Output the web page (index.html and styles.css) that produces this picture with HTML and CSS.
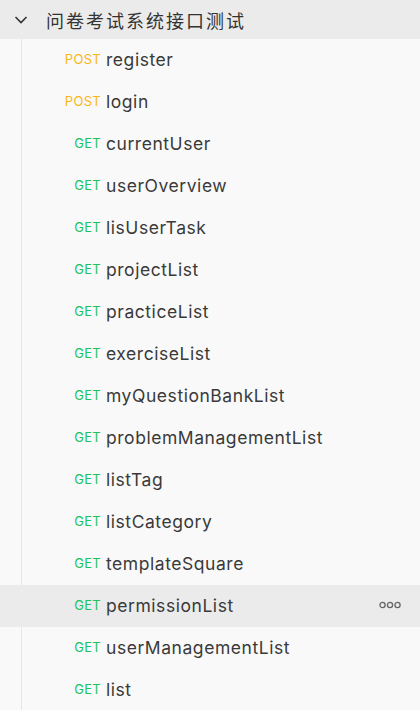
FILE: index.html
```html
<!DOCTYPE html>
<html>
<head>
<meta charset="utf-8">
<link rel="stylesheet" href="styles.css">
</head>
<body>
<div class="tree">
  <div class="folder">
    <svg class="chev" width="14" height="10" viewBox="0 0 14 10"><path d="M1.5 2 L7 7.5 L12.5 2" fill="none" stroke="#333" stroke-width="1.6"/></svg>
    <span class="folder-name">问卷考试系统接口测试</span>
  </div>
  <div class="items">
    <div class="item"><span class="m post">POST</span><span class="n">register</span></div>
    <div class="item"><span class="m post">POST</span><span class="n">login</span></div>
    <div class="item"><span class="m get">GET</span><span class="n">currentUser</span></div>
    <div class="item"><span class="m get">GET</span><span class="n">userOverview</span></div>
    <div class="item"><span class="m get">GET</span><span class="n">lisUserTask</span></div>
    <div class="item"><span class="m get">GET</span><span class="n">projectList</span></div>
    <div class="item"><span class="m get">GET</span><span class="n">practiceList</span></div>
    <div class="item"><span class="m get">GET</span><span class="n">exerciseList</span></div>
    <div class="item"><span class="m get">GET</span><span class="n">myQuestionBankList</span></div>
    <div class="item"><span class="m get">GET</span><span class="n">problemManagementList</span></div>
    <div class="item"><span class="m get">GET</span><span class="n">listTag</span></div>
    <div class="item"><span class="m get">GET</span><span class="n">listCategory</span></div>
    <div class="item"><span class="m get">GET</span><span class="n">templateSquare</span></div>
    <div class="item active"><span class="m get">GET</span><span class="n">permissionList</span>
      <svg class="more" width="22" height="8" viewBox="0 0 22 8"><circle cx="3.5" cy="4" r="2.6" fill="none" stroke="#666" stroke-width="1.3"/><circle cx="11" cy="4" r="2.6" fill="none" stroke="#666" stroke-width="1.3"/><circle cx="18.5" cy="4" r="2.6" fill="none" stroke="#666" stroke-width="1.3"/></svg>
    </div>
    <div class="item"><span class="m get">GET</span><span class="n">userManagementList</span></div>
    <div class="item"><span class="m get">GET</span><span class="n">list</span></div>
  </div>
</div>
</body>
</html>
```

FILE: styles.css
```css
html, body {
  margin: 0;
  padding: 0;
  background: #f9f9f9;
}
body {
  font-family: Inter, "Noto Sans", "Noto Sans CJK SC", sans-serif;
  color: #333;
  overflow: hidden;
}
.tree {
  width: 420px;
}
.folder {
  height: 39px;
  background: #ebebeb;
  display: flex;
  align-items: center;
}
.chev {
  margin-left: 14px;
  margin-right: 18px;
  margin-top: 1px;
}
.folder-name {
  font-family: "Noto Sans CJK SC", sans-serif;
  font-size: 18px;
  letter-spacing: 2px;
  color: #333;
}
.items {
  margin-left: 21px;
  border-left: 1px solid #e6e6e6;
}
.item {
  height: 42px;
  display: flex;
  align-items: center;
  margin-left: -22px;
  padding-left: 22px;
  padding-bottom: 2px;
  box-sizing: border-box;
}
.item.active {
  background: #ebebeb;
}
.m {
  width: 79px;
  text-align: right;
  font-size: 13px;
  letter-spacing: 0.3px;
  margin-right: 5px;
  flex: none;
}
.post { color: #fbb619; }
.get { color: #20c25f; }
.n {
  font-size: 17.5px;
  letter-spacing: 0.55px;
  color: #3a3a3a;
  font-weight: 380;
}
.more {
  margin-left: auto;
  margin-right: 19px;
}
```
